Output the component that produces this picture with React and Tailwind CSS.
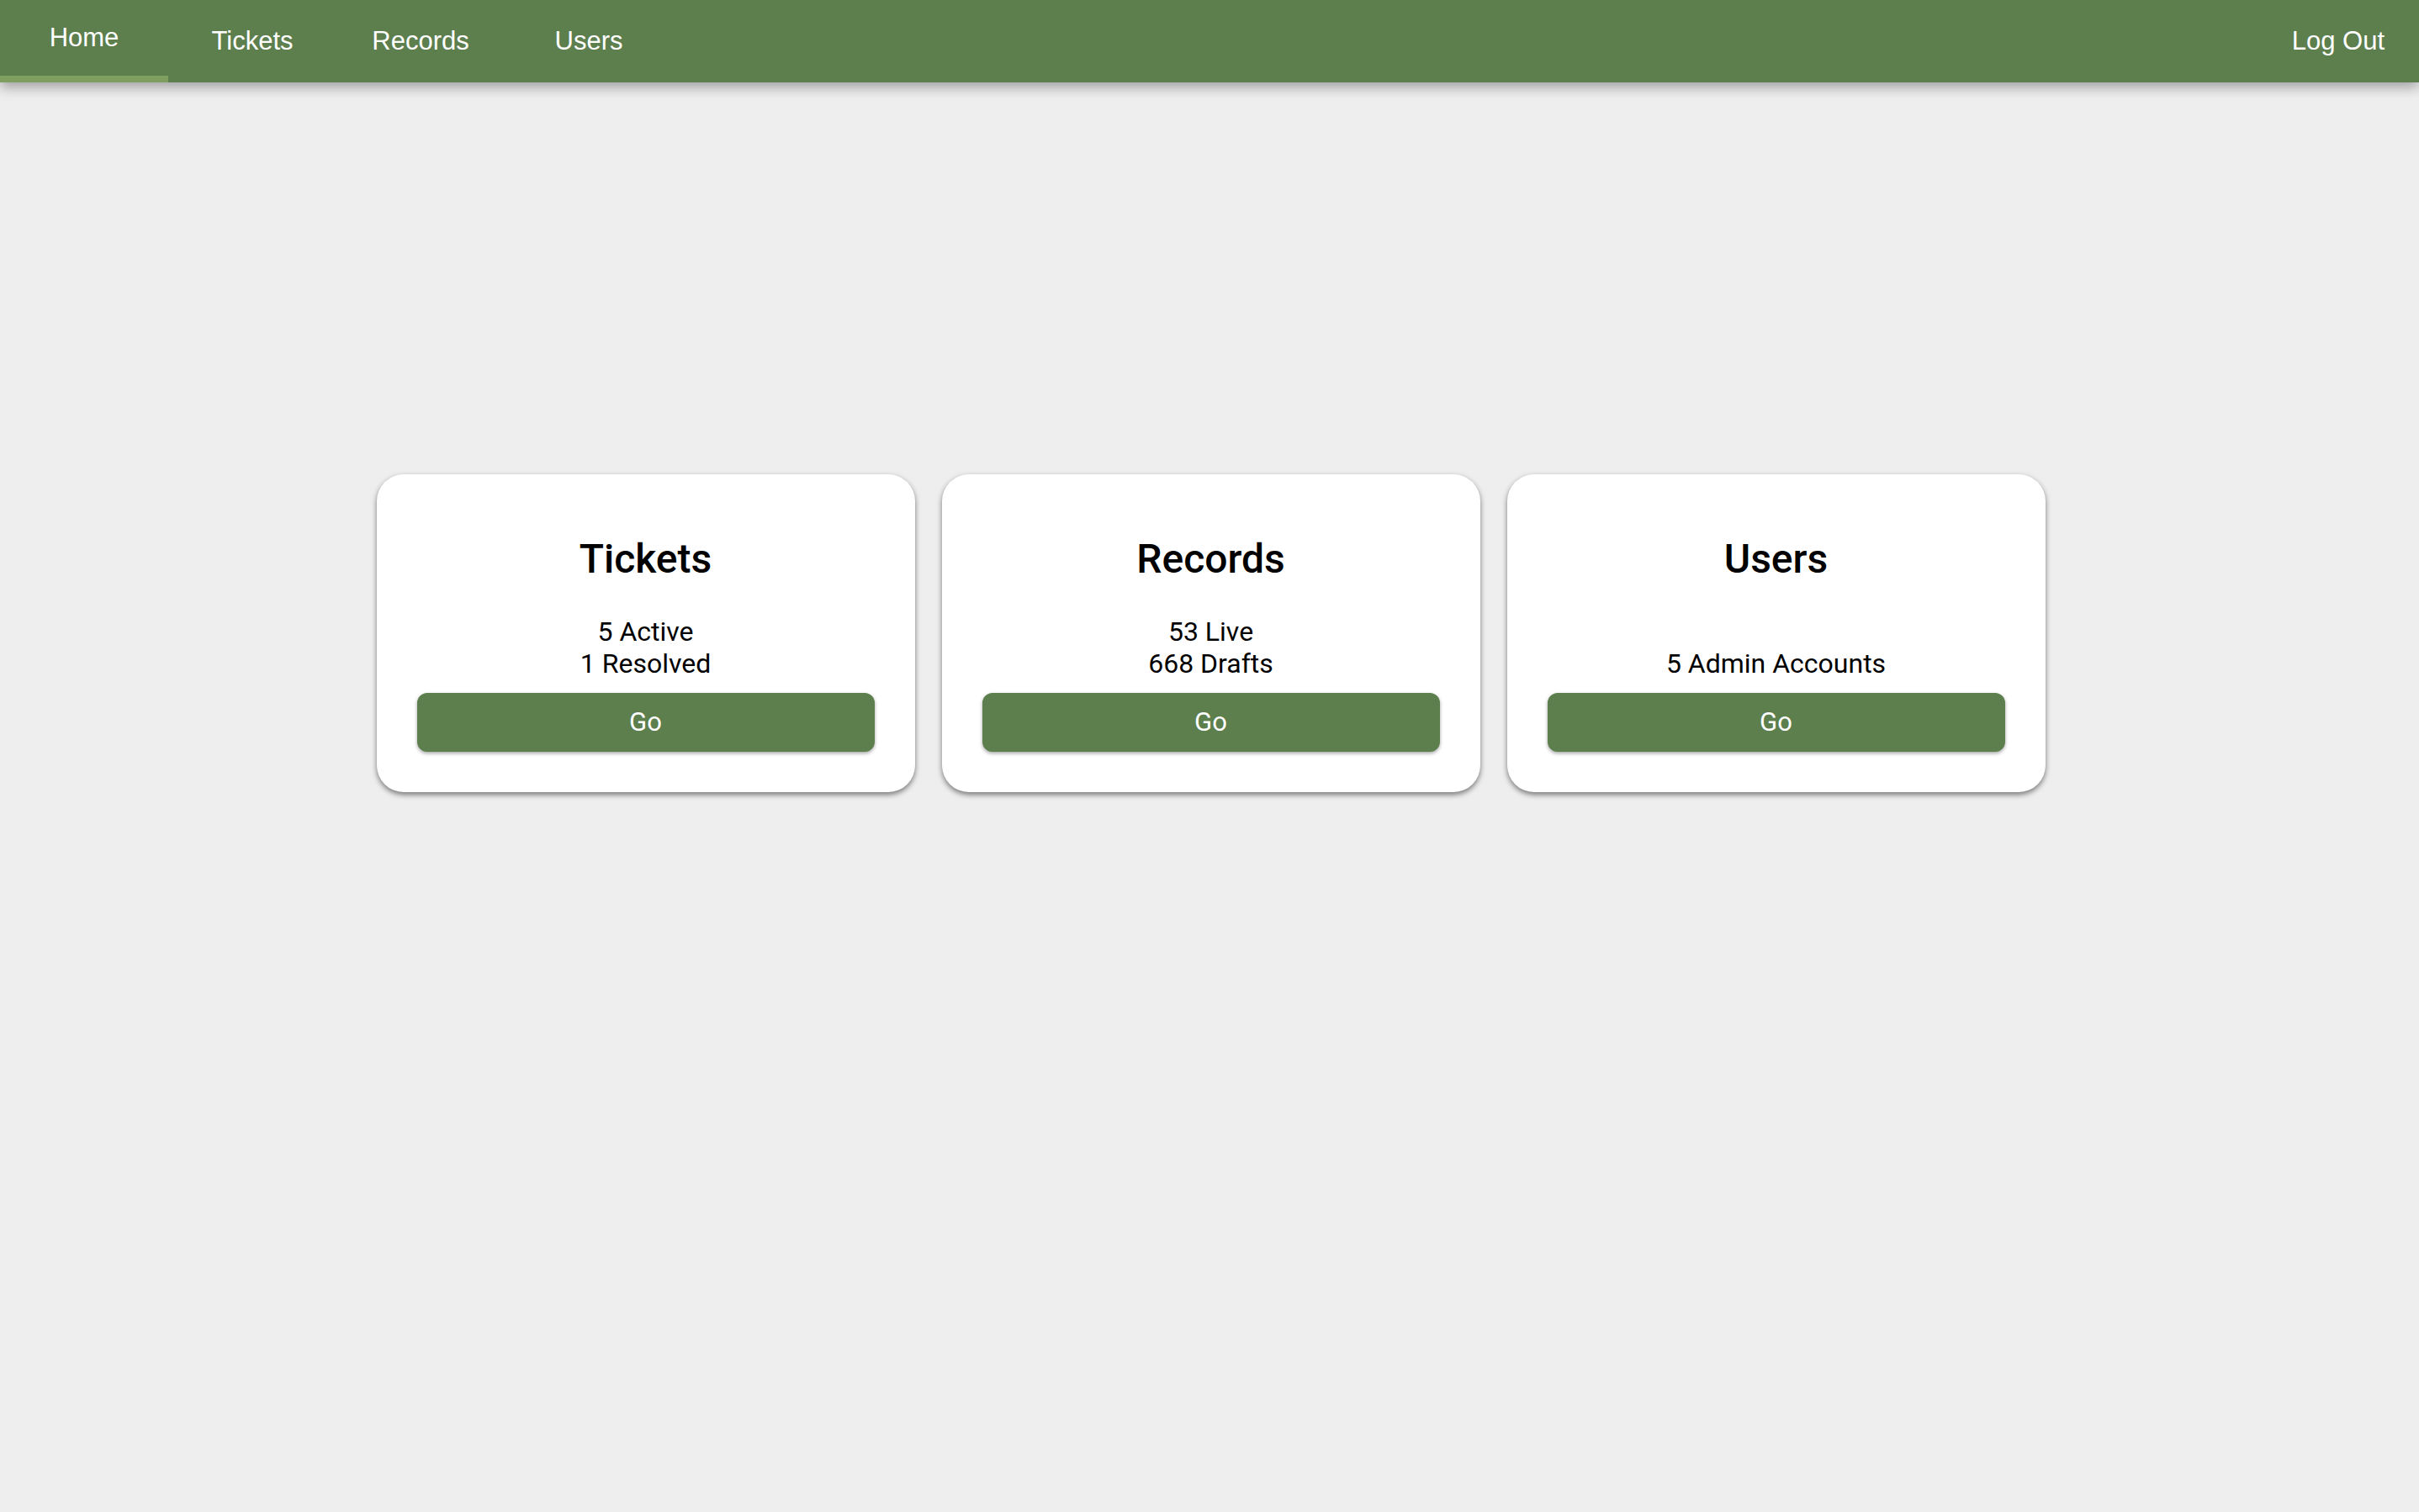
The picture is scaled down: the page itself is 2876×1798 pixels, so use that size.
import React from 'react';

const tabs = [
  { label: 'Home', active: true },
  { label: 'Tickets' },
  { label: 'Records' },
  { label: 'Users' },
];

const cards = [
  { title: 'Tickets', lines: ['5 Active', '1 Resolved'] },
  { title: 'Records', lines: ['53 Live', '668 Drafts'] },
  { title: 'Users', lines: ['', '5 Admin Accounts'] },
];

function NavBar() {
  return (
    <header className="relative z-10 flex h-[98px] items-stretch justify-between bg-[#5d7e4d] text-white shadow-[0_6px_14px_rgba(0,0,0,0.32)] font-['Liberation_Sans',Arial,sans-serif] text-[31px]">
      <nav className="flex items-stretch">
        {tabs.map((t) =>
          t.active ? (
            <a key={t.label} href="#" className="flex w-[200px] flex-col">
              <span className="flex flex-1 items-center justify-center">{t.label}</span>
              <span className="h-[8px] w-full bg-[#7f9f61]" />
            </a>
          ) : (
            <a key={t.label} href="#" className="flex w-[200px] items-center justify-center">
              {t.label}
            </a>
          )
        )}
      </nav>
      <a href="#" className="flex items-center pr-[41px]">Log Out</a>
    </header>
  );
}

function Card({ title, lines }) {
  return (
    <div className="flex w-[640px] flex-col items-center rounded-[32px] bg-white px-[48px] pt-[72px] pb-[48px] shadow-[0_3px_6px_rgba(0,0,0,0.5)]">
      <h2 className="text-[48px] leading-[58px] font-medium text-black">{title}</h2>
      <div className="mt-[38px] text-center text-[32px] leading-[38px] text-black">
        {lines.map((l, i) => (
          <p key={i}>{l || '\u00a0'}</p>
        ))}
      </div>
      <button className="mt-[16px] h-[70px] w-full rounded-[12px] bg-[#5d7e4d] text-[31px] text-white shadow-[0_2px_4px_rgba(0,0,0,0.35)]">
        Go
      </button>
    </div>
  );
}

export default function App() {
  return (
    <div className="min-h-screen bg-[#eeeeee] font-['Roboto','Liberation_Sans',sans-serif]">
      <NavBar />
      <main className="flex justify-center gap-[32px] pl-[3px] pt-[466px]">
        {cards.map((c) => (
          <Card key={c.title} {...c} />
        ))}
      </main>
    </div>
  );
}
